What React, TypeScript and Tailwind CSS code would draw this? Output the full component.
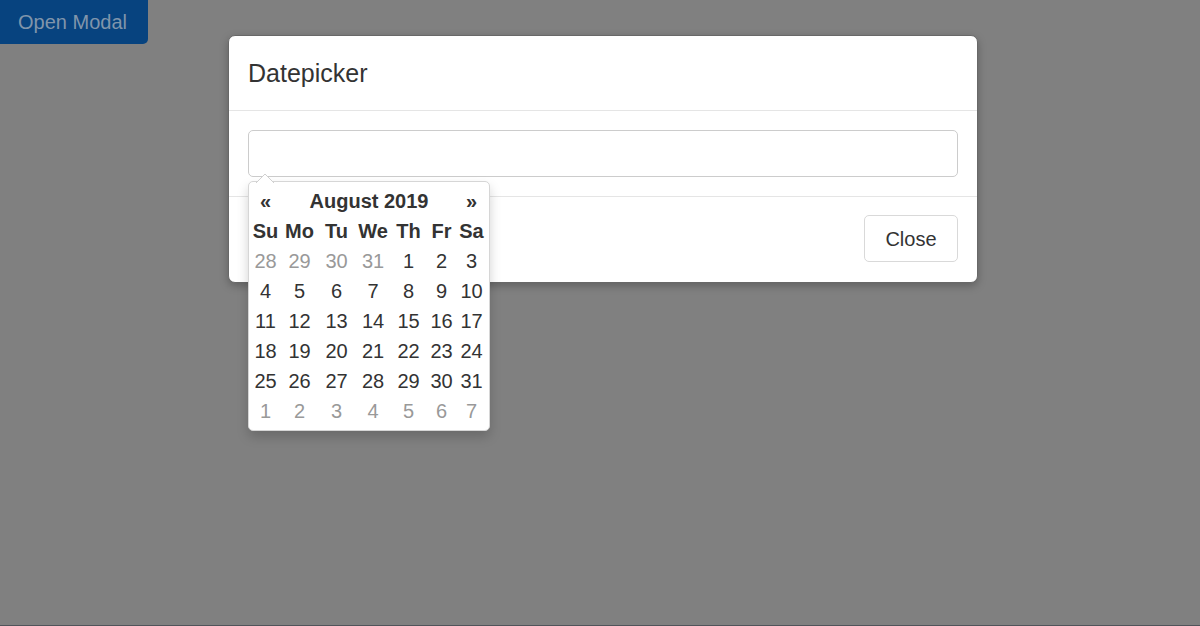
const font = { fontFamily: '"Liberation Sans", Arial, sans-serif' }

const weekDays = ['Su', 'Mo', 'Tu', 'We', 'Th', 'Fr', 'Sa']

// August 2019, leading and trailing days from July / September
const weeks: { day: number; muted?: boolean }[][] = [
  [{ day: 28, muted: true }, { day: 29, muted: true }, { day: 30, muted: true }, { day: 31, muted: true }, { day: 1 }, { day: 2 }, { day: 3 }],
  [{ day: 4 }, { day: 5 }, { day: 6 }, { day: 7 }, { day: 8 }, { day: 9 }, { day: 10 }],
  [{ day: 11 }, { day: 12 }, { day: 13 }, { day: 14 }, { day: 15 }, { day: 16 }, { day: 17 }],
  [{ day: 18 }, { day: 19 }, { day: 20 }, { day: 21 }, { day: 22 }, { day: 23 }, { day: 24 }],
  [{ day: 25 }, { day: 26 }, { day: 27 }, { day: 28 }, { day: 29 }, { day: 30 }, { day: 31 }],
  [{ day: 1, muted: true }, { day: 2, muted: true }, { day: 3, muted: true }, { day: 4, muted: true }, { day: 5, muted: true }, { day: 6, muted: true }, { day: 7, muted: true }],
]

const cols = 'grid grid-cols-[31px_37px_37px_36px_35px_31px_29px]'

function Datepicker() {
  return (
    <div className="absolute left-0 top-[51px] z-10 w-[242px] rounded-[5px] border border-[#d6d6d6] bg-white pl-[1px] pr-[3px] py-[4px] shadow-[0_6px_12px_rgba(0,0,0,0.175)]">
      <svg
        aria-hidden
        className="absolute left-[7px] top-[-9px]"
        width="18"
        height="10"
        viewBox="0 0 18 10"
      >
        <path d="M0 10 L9 1 L18 10 Z" fill="#ffffff" />
        <path d="M0 10 L9 1 L18 10" fill="none" stroke="#d0d0d0" strokeWidth="1" />
      </svg>

      <div className={`${cols} text-[20px] font-bold text-[#333]`}>
        <div className="flex h-[30px] items-center justify-center">«</div>
        <div className="col-span-5 flex h-[30px] items-center justify-center">August 2019</div>
        <div className="flex h-[30px] items-center justify-center">»</div>
      </div>

      <div className={`${cols} text-[20px] font-bold text-[#333]`}>
        {weekDays.map((d) => (
          <div key={d} className="flex h-[30px] items-center justify-center">
            {d}
          </div>
        ))}
      </div>

      {weeks.map((week, i) => (
        <div key={i} className={`${cols} text-[20px]`}>
          {week.map((cell, j) => (
            <div
              key={j}
              className={`flex h-[30px] items-center justify-center ${
                cell.muted ? 'text-[#999]' : 'text-[#333]'
              }`}
            >
              {cell.day}
            </div>
          ))}
        </div>
      ))}
    </div>
  )
}

export default function App() {
  return (
    <div className="relative flex h-[626px] flex-col bg-[#808080]" style={font}>
      <div>
        <button
          type="button"
          className="h-[44px] w-[148px] rounded-br-[5px] bg-[#07437f] pl-[18px] text-left text-[20px] leading-[42px] text-[#8095ab]"
        >
          Open Modal
        </button>
      </div>
      <div className="flex-1" />
      <div className="h-[1px] bg-[#50545a]" />

      <div className="absolute left-[228px] top-[35px] w-[750px] rounded-[7px] border border-[#686868] bg-white shadow-[0_3px_9px_rgba(0,0,0,0.25)]">
        <div className="flex h-[75px] items-center border-b border-[#e5e5e5] px-[19px] pt-[1px]">
          <h4 className="text-[25px] leading-none text-[#333]">Datepicker</h4>
        </div>

        <div className="px-[19px] py-[19px]">
          <div className="relative">
            <input
              type="text"
              className="block h-[47px] w-full rounded-[5px] border border-[#cccccc] bg-white px-3 text-[20px] outline-none"
            />
            <Datepicker />
          </div>
        </div>

        <div className="flex justify-end border-t border-[#e5e5e5] px-[19px] pb-[20px] pt-[18px]">
          <button
            type="button"
            className="h-[47px] w-[94px] rounded-[5px] border border-[#d9d9d9] bg-white text-[20px] text-[#333]"
          >
            Close
          </button>
        </div>
      </div>
    </div>
  )
}
